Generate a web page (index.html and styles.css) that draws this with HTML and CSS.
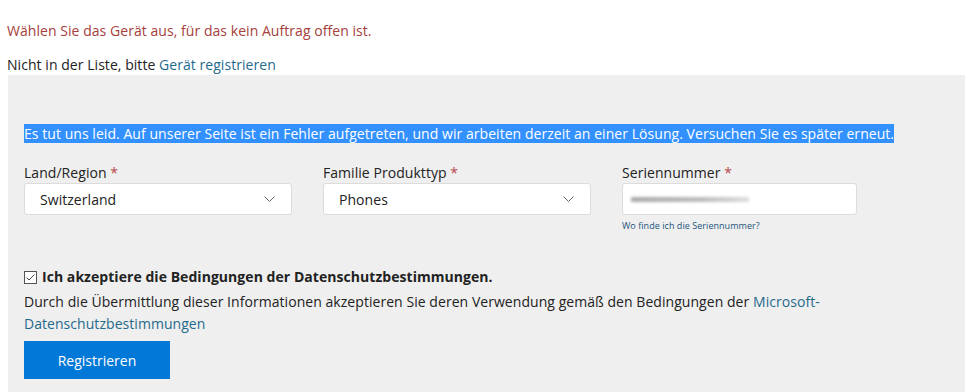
FILE: index.html
```html
<!DOCTYPE html>
<html lang="de">
<head>
    <meta charset="UTF-8">
    <meta name="viewport" content="width=device-width, initial-scale=1.0">
    <title>Gerät auswählen</title>
    <link rel="stylesheet" href="styles.css">
</head>
<body>
    <p class="notice">Wählen Sie das Gerät aus, für das kein Auftrag offen ist.</p>
    <p class="hint">Nicht in der Liste, bitte <a href="#">Gerät registrieren</a></p>

    <div class="panel">
        <p class="error"><span class="selected">Es tut uns leid. Auf unserer Seite ist ein Fehler aufgetreten, und wir arbeiten derzeit an einer Lösung. Versuchen Sie es später erneut.</span></p>

        <div class="fields">
            <div class="field">
                <label>Land/Region <span class="req">*</span></label>
                <div class="select">
                    <span>Switzerland</span>
                    <svg width="11" height="7" viewBox="0 0 11 7"><path d="M0.5 0.5 L5.5 5.5 L10.5 0.5" fill="none" stroke="#666" stroke-width="1"/></svg>
                </div>
            </div>
            <div class="field">
                <label>Familie Produkttyp <span class="req">*</span></label>
                <div class="select">
                    <span>Phones</span>
                    <svg width="11" height="7" viewBox="0 0 11 7"><path d="M0.5 0.5 L5.5 5.5 L10.5 0.5" fill="none" stroke="#666" stroke-width="1"/></svg>
                </div>
            </div>
            <div class="field serial">
                <label>Seriennummer <span class="req">*</span></label>
                <div class="input"><div class="blurred"></div></div>
                <a href="#" class="small-link">Wo finde ich die Seriennummer?</a>
            </div>
        </div>

        <label class="accept">
            <span class="box"><svg width="9" height="7" viewBox="0 0 9 7"><path d="M0.5 3.5 L3 6 L8.5 0.5" fill="none" stroke="#444" stroke-width="1"/></svg></span>
            Ich akzeptiere die Bedingungen der Datenschutzbestimmungen.
        </label>
        <p class="terms">Durch die Übermittlung dieser Informationen akzeptieren Sie deren Verwendung gemäß den Bedingungen der <a href="#">Microsoft-Datenschutzbestimmungen</a></p>

        <button type="button">Registrieren</button>
    </div>
</body>
</html>
```

FILE: styles.css
```css
body {
    font-family: 'Open Sans', 'Noto Sans', sans-serif;
    font-size: 14px;
    letter-spacing: 0.05px;
    color: #222;
    margin: 0;
    padding: 0 0 0 7px;
    background-color: #fff;
    overflow: hidden;
}

a {
    color: #1f6a8c;
    text-decoration: none;
}

.notice {
    color: #a5403c;
    margin: 0;
    padding-top: 21px;
    line-height: 20px;
}

.hint {
    margin: 14px 0 0 0;
    line-height: 20px;
}

.panel {
    background-color: #efefef;
    margin: 0 0 0 1px;
    padding: 49px 16px 0 16px;
    height: 317px;
    box-sizing: border-box;
}

.error {
    margin: 0;
    line-height: 20px;
}

.selected {
    background-color: #3390ff;
    color: #fff;
}

.fields {
    display: flex;
    gap: 31px;
    margin-top: 19px;
}

.field {
    width: 268px;
}

.field.serial {
    width: 235px;
}

.field label {
    display: block;
    line-height: 20px;
}

.req {
    color: #b9474c;
}

.select, .input {
    height: 32px;
    box-sizing: border-box;
    background-color: #fff;
    border: 1px solid #dcdcdc;
    border-radius: 3px;
    display: flex;
    align-items: center;
    justify-content: space-between;
    padding: 0 16px 0 15px;
}

.input {
    padding: 0 8px;
}

.blurred {
    width: 118px;
    height: 5px;
    background: linear-gradient(90deg, #aaa, #bbb 60%, #ddd);
    filter: blur(1.5px);
}

.small-link {
    display: block;
    font-size: 9px;
    margin-top: 4px;
    color: #23547a;
}

.accept {
    display: flex;
    align-items: center;
    gap: 5px;
    font-weight: bold;
    margin-top: 35px;
    line-height: 20px;
}

.box {
    width: 11px;
    height: 11px;
    border: 1px solid #555;
    background-color: #fff;
    display: flex;
    align-items: center;
    justify-content: center;
}

.terms {
    margin: 4px 0 0 0;
    line-height: 22px;
    max-width: 820px;
}

button {
    margin-top: 6px;
    width: 146px;
    height: 38px;
    background-color: #0078d7;
    color: #fff;
    border: none;
    font-family: inherit;
    font-size: 14px;
    cursor: pointer;
}
```
